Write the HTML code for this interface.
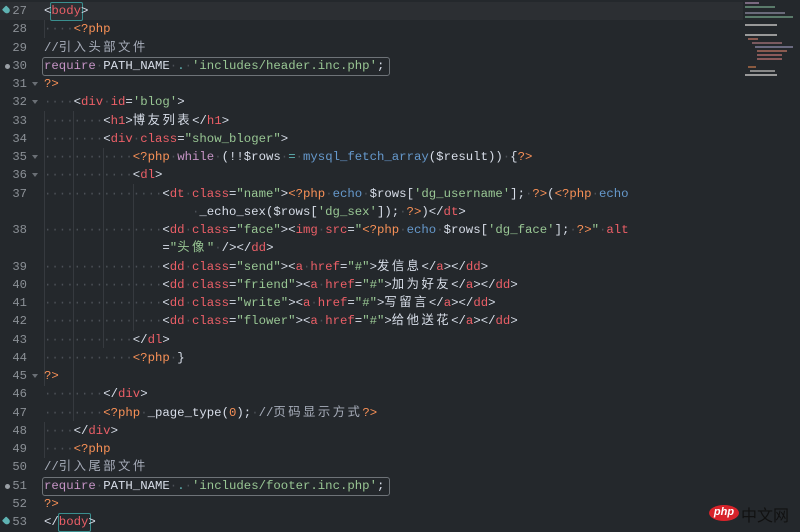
<!DOCTYPE html>
<html><head><meta charset="utf-8">
<style>
html,body{margin:0;padding:0;}
body{width:800px;height:531px;background:#24282c;overflow:hidden;position:relative;font-family:"Liberation Mono","Noto Sans CJK SC",monospace;}
.hl{position:absolute;left:0;top:2px;width:743px;height:18px;background:#2c2f33;}
.g{position:absolute;left:0;top:2px;width:40px;font-size:12.2px;line-height:18.25px;color:#8b9096;}
.g div{height:18.25px;position:relative;text-align:right;padding-right:13px;}
.g .ar::after{content:"";position:absolute;left:32px;top:7px;border-left:3px solid transparent;border-right:3px solid transparent;border-top:4px solid #6a6f75;}
.g .dt::before{content:"";position:absolute;left:5px;top:7px;width:5px;height:5px;border-radius:50%;background:#9aa0a6;}
.g .tg::before{content:"";position:absolute;left:3px;top:5px;width:7px;height:6px;background:#5fb3b3;border-radius:1px 3px 3px 1px;transform:rotate(45deg);}
pre{position:absolute;left:44px;top:2px;margin:0;font-family:inherit;font-size:12.33px;line-height:18.25px;color:#d8dee9;white-space:pre;}
i{font-style:normal;color:#4c5157;}
.t{color:#ec5f67}.p{color:#f99157}.k{color:#c594c5}.f{color:#6699cc}.s{color:#99c794}.c{color:#a7adba}.o{color:#5fb3b3}.n{color:#f99157}
.z{letter-spacing:2.5px}
.box{position:absolute;border:1px solid #6e7378;border-radius:3px;}
.tb{position:absolute;border:1px solid #3a8f8f;border-radius:2px;}
.ig{position:absolute;width:1px;background:#363a3f;}
.mm div{position:absolute;height:2px;}
.logo{position:absolute;left:709px;top:505px;width:30px;height:16px;border-radius:50%;background:#d8232a;color:#fff;font:italic bold 11px "Liberation Sans",sans-serif;text-align:center;line-height:15px;}
.cn{position:absolute;left:741px;top:502px;font:16px "Noto Sans CJK SC",sans-serif;color:#111;letter-spacing:0px;}
</style></head><body>
<div class="hl"></div>
<div class="ig" style="left:44px;top:20px;height:18px"></div>
<div class="ig" style="left:44px;top:111px;height:275px"></div>
<div class="ig" style="left:73px;top:111px;height:310px"></div>
<div class="ig" style="left:44px;top:422px;height:36px"></div>
<div class="ig" style="left:103px;top:148px;height:200px"></div>
<div class="ig" style="left:133px;top:184px;height:147px"></div>
<div class="ig" style="left:162px;top:202px;height:0px"></div>
<div class="g">
<div class="tg">27</div><div>28</div><div>29</div><div class="dt">30</div><div class="ar">31</div><div class="ar">32</div><div>33</div><div>34</div><div class="ar">35</div><div class="ar">36</div><div>37</div><div></div><div>38</div><div></div><div>39</div><div>40</div><div>41</div><div>42</div><div>43</div><div>44</div><div class="ar">45</div><div>46</div><div>47</div><div>48</div><div>49</div><div>50</div><div class="dt">51</div><div>52</div><div class="tg">53</div>
</div>
<div class="tb" style="left:50px;top:2px;width:31px;height:17px"></div>
<div class="tb" style="left:58px;top:513px;width:31px;height:17px"></div>
<div class="box" style="left:42px;top:57px;width:346px;height:17px"></div>
<div class="box" style="left:42px;top:477px;width:346px;height:17px"></div>
<pre>&lt;<span class="t">body</span>&gt;
<i>····</i><span class="p">&lt;?php</span>
<span class="c">//<span class="z">引入头部文件</span></span>
<span class="k">require</span><i>·</i>PATH_NAME<i>·</i><span class="o">.</span><i>·</i><span class="s">'includes/header.inc.php'</span>;
<span class="p">?&gt;</span>
<i>····</i>&lt;<span class="t">div</span><i>·</i><span class="t">id</span>=<span class="s">'blog'</span>&gt;
<i>········</i>&lt;<span class="t">h1</span>&gt;<span class="z">博友列表</span>&lt;/<span class="t">h1</span>&gt;
<i>········</i>&lt;<span class="t">div</span><i>·</i><span class="t">class</span>=<span class="s">"show_bloger"</span>&gt;
<i>············</i><span class="p">&lt;?php</span><i>·</i><span class="k">while</span><i>·</i>(!!$rows<i>·</i><span class="o">=</span><i>·</i><span class="f">mysql_fetch_array</span>($result))<i>·</i>{<span class="p">?&gt;</span>
<i>············</i>&lt;<span class="t">dl</span>&gt;
<i>················</i>&lt;<span class="t">dt</span><i>·</i><span class="t">class</span>=<span class="s">"name"</span>&gt;<span class="p">&lt;?php</span><i>·</i><span class="f">echo</span><i>·</i>$rows[<span class="s">'dg_username'</span>];<i>·</i><span class="p">?&gt;</span>(<span class="p">&lt;?php</span><i>·</i><span class="f">echo</span>
                    <i>·</i>_echo_sex($rows[<span class="s">'dg_sex'</span>]);<i>·</i><span class="p">?&gt;</span>)&lt;/<span class="t">dt</span>&gt;
<i>················</i>&lt;<span class="t">dd</span><i>·</i><span class="t">class</span>=<span class="s">"face"</span>&gt;&lt;<span class="t">img</span><i>·</i><span class="t">src</span>=<span class="s">"</span><span class="p">&lt;?php</span><i>·</i><span class="f">echo</span><i>·</i>$rows[<span class="s">'dg_face'</span>];<i>·</i><span class="p">?&gt;</span><span class="s">"</span><i>·</i><span class="t">alt</span>
                =<span class="s">"<span class="z">头像</span>"</span><i>·</i>/&gt;&lt;/<span class="t">dd</span>&gt;
<i>················</i>&lt;<span class="t">dd</span><i>·</i><span class="t">class</span>=<span class="s">"send"</span>&gt;&lt;<span class="t">a</span><i>·</i><span class="t">href</span>=<span class="s">"#"</span>&gt;<span class="z">发信息</span>&lt;/<span class="t">a</span>&gt;&lt;/<span class="t">dd</span>&gt;
<i>················</i>&lt;<span class="t">dd</span><i>·</i><span class="t">class</span>=<span class="s">"friend"</span>&gt;&lt;<span class="t">a</span><i>·</i><span class="t">href</span>=<span class="s">"#"</span>&gt;<span class="z">加为好友</span>&lt;/<span class="t">a</span>&gt;&lt;/<span class="t">dd</span>&gt;
<i>················</i>&lt;<span class="t">dd</span><i>·</i><span class="t">class</span>=<span class="s">"write"</span>&gt;&lt;<span class="t">a</span><i>·</i><span class="t">href</span>=<span class="s">"#"</span>&gt;<span class="z">写留言</span>&lt;/<span class="t">a</span>&gt;&lt;/<span class="t">dd</span>&gt;
<i>················</i>&lt;<span class="t">dd</span><i>·</i><span class="t">class</span>=<span class="s">"flower"</span>&gt;&lt;<span class="t">a</span><i>·</i><span class="t">href</span>=<span class="s">"#"</span>&gt;<span class="z">给他送花</span>&lt;/<span class="t">a</span>&gt;&lt;/<span class="t">dd</span>&gt;
<i>············</i>&lt;/<span class="t">dl</span>&gt;
<i>············</i><span class="p">&lt;?php</span><i>·</i>}
<span class="p">?&gt;</span>
<i>········</i>&lt;/<span class="t">div</span>&gt;
<i>········</i><span class="p">&lt;?php</span><i>·</i>_page_type(<span class="n">0</span>);<i>·</i><span class="c">//<span class="z">页码显示方式</span></span><span class="p">?&gt;</span>
<i>····</i>&lt;/<span class="t">div</span>&gt;
<i>····</i><span class="p">&lt;?php</span>
<span class="c">//<span class="z">引入尾部文件</span></span>
<span class="k">require</span><i>·</i>PATH_NAME<i>·</i><span class="o">.</span><i>·</i><span class="s">'includes/footer.inc.php'</span>;
<span class="p">?&gt;</span>
&lt;/<span class="t">body</span>&gt;</pre>
<div class="mm">
<div style="left:745px;top:2px;width:14px;background:#7a6a80"></div>
<div style="left:745px;top:6px;width:30px;background:#5a7a6a"></div>
<div style="left:745px;top:12px;width:40px;background:#6a6a7a"></div>
<div style="left:745px;top:16px;width:48px;background:#5a7a6a"></div>
<div style="left:745px;top:24px;width:32px;background:#999"></div>
<div style="left:745px;top:34px;width:32px;background:#999"></div>
<div style="left:748px;top:38px;width:10px;background:#8a5a50"></div>
<div style="left:752px;top:42px;width:30px;background:#7a5a60"></div>
<div style="left:755px;top:46px;width:38px;background:#6a6a80"></div>
<div style="left:757px;top:50px;width:30px;background:#8a5a50"></div>
<div style="left:757px;top:54px;width:25px;background:#8a5a5a"></div>
<div style="left:757px;top:58px;width:25px;background:#8a5a5a"></div>
<div style="left:748px;top:66px;width:8px;background:#8a5a40"></div>
<div style="left:750px;top:70px;width:25px;background:#888"></div>
<div style="left:745px;top:74px;width:32px;background:#999"></div>
</div>
<div class="logo">php</div>
<div class="cn">中文网</div>
</body></html>
